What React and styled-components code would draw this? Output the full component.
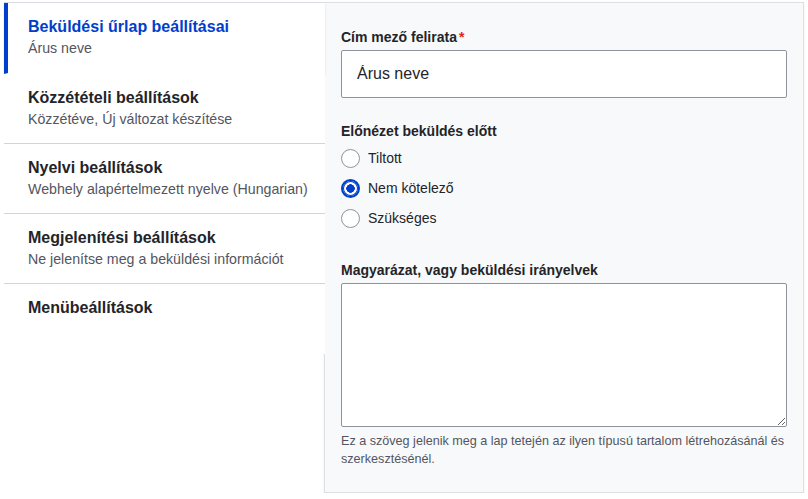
import React, {useState} from "react";
import styled, {createGlobalStyle} from "styled-components";

const tabs = [
    {title: "Beküldési űrlap beállításai", summary: "Árus neve"},
    {title: "Közzétételi beállítások", summary: "Közzétéve, Új változat készítése"},
    {title: "Nyelvi beállítások", summary: "Webhely alapértelmezett nyelve (Hungarian)"},
    {title: "Megjelenítési beállítások", summary: "Ne jelenítse meg a beküldési információt"},
    {title: "Menübeállítások", summary: null}
]

const options = ["Tiltott", "Nem kötelező", "Szükséges"]

const App = () => {
    const [active, setActive] = useState(0)
    const [preview, setPreview] = useState(1)

    return (
        <>
            <GlobalStyle/>
            <StyledWrapper>
                <StyledMenu>
                    {tabs.map((tab, i) => (
                        <StyledTab key={tab.title} active={i === active} onClick={() => setActive(i)}>
                            <StyledTabTitle active={i === active}>{tab.title}</StyledTabTitle>
                            {tab.summary && <StyledTabSummary>{tab.summary}</StyledTabSummary>}
                        </StyledTab>
                    ))}
                </StyledMenu>
                <StyledPane>
                    <StyledLabel>Cím mező felirata<StyledRequired>*</StyledRequired></StyledLabel>
                    <StyledInput defaultValue="Árus neve"/>

                    <StyledLabel top={24}>Előnézet beküldés előtt</StyledLabel>
                    <StyledRadios>
                        {options.map((opt, i) => (
                            <StyledRadioRow key={opt} onClick={() => setPreview(i)}>
                                <StyledRadio checked={preview === i}/>
                                {opt}
                            </StyledRadioRow>
                        ))}
                    </StyledRadios>

                    <StyledLabel top={33}>Magyarázat, vagy beküldési irányelvek</StyledLabel>
                    <StyledTextarea/>
                    <StyledDescription>
                        Ez a szöveg jelenik meg a lap tetején az ilyen típusú tartalom létrehozásánál és szerkesztésénél.
                    </StyledDescription>
                </StyledPane>
            </StyledWrapper>
        </>
    )
}

export default App;

const GlobalStyle = createGlobalStyle`
  body {
    margin: 0;
    background: #fff;
    font-family: 'Liberation Sans', Arial, sans-serif;
    color: #232429;
  }
`

const StyledWrapper = styled.div`
  display: flex;
  align-items: flex-start;
  padding: 2px 4px 0 4px;
`

const StyledMenu = styled.ul`
  list-style: none;
  margin: 0 -1px 0 0;
  padding: 0;
  width: 321px;
  flex-shrink: 0;
  border-top: 1px solid #dedfe4;
  position: relative;
  z-index: 1;
`

const StyledTab = styled.li`
  box-sizing: border-box;
  height: ${p => p.active ? '71px' : '70px'};
  padding: 13px 8px 0 ${p => p.active ? '20px' : '24px'};
  border-left: ${p => p.active ? '4px solid #003ecc' : 'none'};
  border-bottom: 1px solid ${p => p.active ? 'transparent' : '#d3d4d9'};
  background: #fff;
  box-shadow: ${p => p.active ? '0 1px 2px rgba(0, 0, 0, 0.12)' : 'none'};
  cursor: pointer;

  &:last-child {
    border-bottom: none;
  }
`

const StyledTabTitle = styled.div`
  font-size: 16px;
  font-weight: bold;
  line-height: 22px;
  color: ${p => p.active ? '#003ecc' : '#232429'};
`

const StyledTabSummary = styled.div`
  font-size: 14.2px;
  line-height: 20px;
  white-space: nowrap;
  color: #545560;
`

const StyledPane = styled.div`
  flex: 1;
  box-sizing: border-box;
  height: 491px;
  padding: 25px 16px 0 16px;
  background: #f8f9fa;
  border: 1px solid #dedfe4;
  box-shadow: 0 1px 2px rgba(0, 0, 0, 0.08);
`

const StyledLabel = styled.div`
  font-size: 14px;
  font-weight: bold;
  line-height: 18px;
  margin-top: ${p => p.top || 0}px;
  margin-bottom: 4px;
`

const StyledRequired = styled.span`
  color: #dc2323;
  margin-left: 2px;
`

const StyledInput = styled.input`
  display: block;
  box-sizing: border-box;
  width: 100%;
  height: 48px;
  padding: 0 15px;
  font-family: 'Liberation Sans', Arial, sans-serif;
  font-size: 16px;
  color: #232429;
  background: #fff;
  border: 1px solid #8e929c;
  border-radius: 2px;
  outline: none;
`

const StyledRadios = styled.div`
  display: flex;
  flex-direction: column;
  gap: 10px;
  margin-top: 8px;
`

const StyledRadioRow = styled.label`
  display: flex;
  align-items: center;
  gap: 8px;
  height: 20px;
  font-size: 14px;
  cursor: pointer;
`

const StyledRadio = styled.span`
  box-sizing: border-box;
  width: 19px;
  height: 19px;
  border-radius: 50%;
  background: ${p => p.checked
    ? 'radial-gradient(circle, #003ecc 0 4px, #fff 4.5px)'
    : '#fff'};
  border: ${p => p.checked ? '2px solid #003ecc' : '1px solid #8e929c'};
  box-shadow: ${p => p.checked ? 'inset 0 0 0 1px #003ecc' : 'none'};
`

const StyledTextarea = styled.textarea`
  display: block;
  box-sizing: border-box;
  width: 100%;
  height: 144px;
  margin: 0;
  padding: 8px 15px;
  background: #fff;
  border: 1px solid #8e929c;
  border-radius: 2px;
  resize: vertical;
  outline: none;
`

const StyledDescription = styled.div`
  margin-top: 5px;
  margin-right: -4px;
  font-size: 12.6px;
  line-height: 18px;
  color: #545560;
`
